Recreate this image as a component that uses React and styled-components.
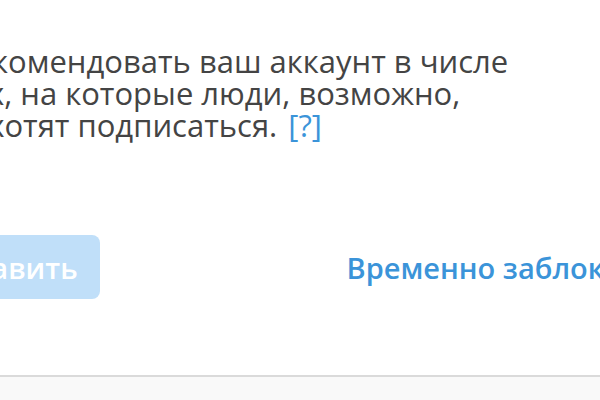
import React from "react";
import styled, { createGlobalStyle } from "styled-components";

const GlobalStyle = createGlobalStyle`
  body {
    margin: 0;
    background: #fff;
    font-family: "Open Sans", "Noto Sans", sans-serif;
  }
`;

const App = () => {
  return (
    <Page>
      <GlobalStyle />
      <Content>
        <Option>
          <Checkbox type="checkbox" />
          <Description>
            Рекомендовать ваш аккаунт в числе
            <br />
            тех, на которые люди, возможно,
            <br />
            захотят подписаться. <Help href="#">[?]</Help>
          </Description>
        </Option>
        <Actions>
          <SaveButton disabled>Добавить</SaveButton>
          <BlockLink href="#">Временно заблокировать</BlockLink>
        </Actions>
      </Content>
      <Footer />
    </Page>
  );
};

const Page = styled.div`
  height: 400px;
  overflow: hidden;
  display: flex;
  flex-direction: column;
`;

const Content = styled.div`
  flex: 1;
  margin-left: -140px;
  padding-top: 45px;
`;

const Option = styled.label`
  display: flex;
  align-items: flex-start;
  gap: 18px;
`;

const Checkbox = styled.input`
  width: 24px;
  height: 24px;
  margin: 4px 0 0 54px;
`;

const Description = styled.p`
  margin: 0;
  font-size: 31px;
  line-height: 32px;
  color: #444;
  white-space: nowrap;
`;

const Help = styled.a`
  margin-left: 3px;
  color: #3b94d9;
  text-decoration: none;
`;

const Actions = styled.div`
  display: flex;
  align-items: center;
  gap: 247px;
  margin-top: 94px;
`;

const SaveButton = styled.button`
  height: 64px;
  margin-left: 53px;
  padding: 0 22px;
  border: none;
  border-radius: 8px;
  background: #c0dff9;
  color: #fff;
  font-family: inherit;
  font-size: 29px;
  font-weight: 600;
`;

const BlockLink = styled.a`
  color: #3b94d9;
  font-size: 29px;
  font-weight: 600;
  text-decoration: none;
  white-space: nowrap;
`;

const Footer = styled.div`
  height: 23px;
  border-top: 2px solid #dadada;
  background: #f9f9f9;
`;

export default App;
